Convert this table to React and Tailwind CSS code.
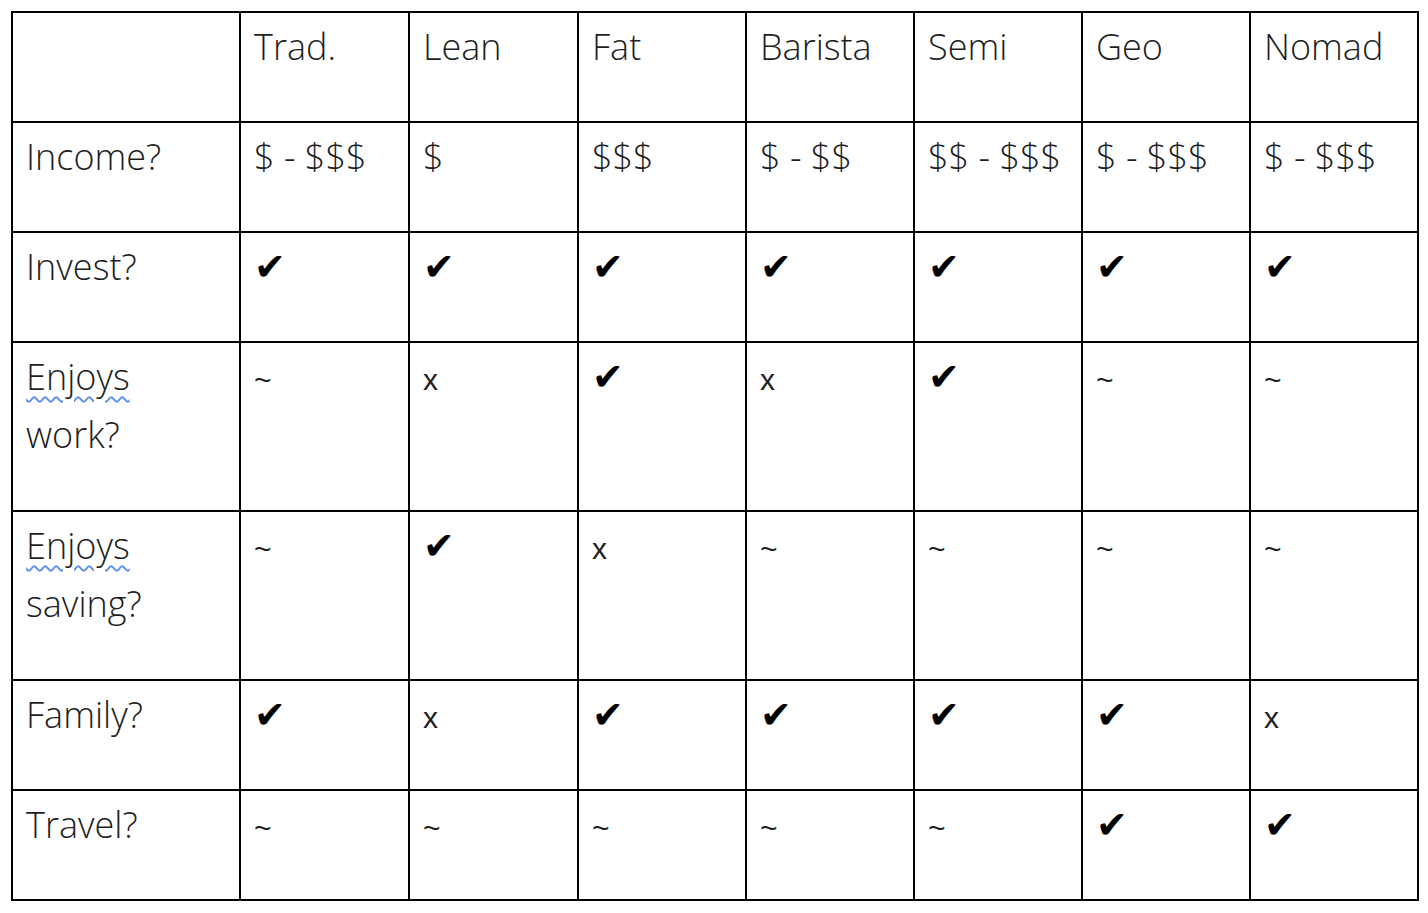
import React from "react";

const C = "✔";
const headers = ["Trad.", "Lean", "Fat", "Barista", "Semi", "Geo", "Nomad"];
const rows = [
  { label: ["Income?"], h: "h-[110px]", cells: ["$ - $$$", "$", "$$$", "$ - $$", "$$ - $$$", "$ - $$$", "$ - $$$"] },
  { label: ["Invest?"], h: "h-[110px]", cells: [C, C, C, C, C, C, C] },
  { label: ["Enjoys", "work?"], h: "h-[169px]", cells: ["~", "x", C, "x", C, "~", "~"] },
  { label: ["Enjoys", "saving?"], h: "h-[169px]", cells: ["~", C, "x", "~", "~", "~", "~"] },
  { label: ["Family?"], h: "h-[110px]", cells: [C, "x", C, C, C, C, "x"] },
  { label: ["Travel?"], h: "h-[110px]", cells: ["~", "~", "~", "~", "~", C, C] },
];

function Cell({ v }) {
  if (v === C) {
    return (
      <span className="text-[38px] leading-[58px] text-black" style={{ fontFamily: '"DejaVu Sans", sans-serif' }}>
        {C}
      </span>
    );
  }
  if (v === "~" || v === "x") {
    return (
      <span className="text-[30px] leading-[58px] font-normal text-[#222]" style={{ fontFamily: '"Liberation Sans", Arial, sans-serif' }}>
        {v}
      </span>
    );
  }
  return <span>{v}</span>;
}

export default function App() {
  return (
    <div className="w-[1428px] h-[913px] bg-white pt-[11px] pl-[11px]">
      <table
        className="table-fixed border-collapse text-[#1e1e1e] text-[36px] font-light leading-[58px]"
        style={{ fontFamily: '"Open Sans", Inter, sans-serif' }}
      >
        <colgroup>
          <col className="w-[228px]" />
          <col className="w-[169px]" />
          <col className="w-[169px]" />
          <col className="w-[168px]" />
          <col className="w-[168px]" />
          <col className="w-[168px]" />
          <col className="w-[168px]" />
          <col className="w-[168px]" />
        </colgroup>
        <tbody>
          <tr className="h-[110px]">
            <td className="border-2 border-black align-top pl-[13px] pt-[5px]"></td>
            {headers.map((h) => (
              <td key={h} className="border-2 border-black align-top pl-[13px] pt-[5px]">
                {h}
              </td>
            ))}
          </tr>
          {rows.map((r, i) => (
            <tr key={i} className={r.h}>
              <td className="border-2 border-black align-top pl-[13px] pt-[5px]">
                {r.label.map((l, j) =>
                  l === "Enjoys" ? (
                    <div key={j}>
                      <span className="underline decoration-wavy decoration-[#5b8def] decoration-[1.5px] underline-offset-[6px]">
                        {l}
                      </span>
                    </div>
                  ) : (
                    <div key={j}>{l}</div>
                  )
                )}
              </td>
              {r.cells.map((v, j) => (
                <td key={j} className="border-2 border-black align-top pl-[13px] pt-[5px]">
                  <Cell v={v} />
                </td>
              ))}
            </tr>
          ))}
        </tbody>
      </table>
    </div>
  );
}
